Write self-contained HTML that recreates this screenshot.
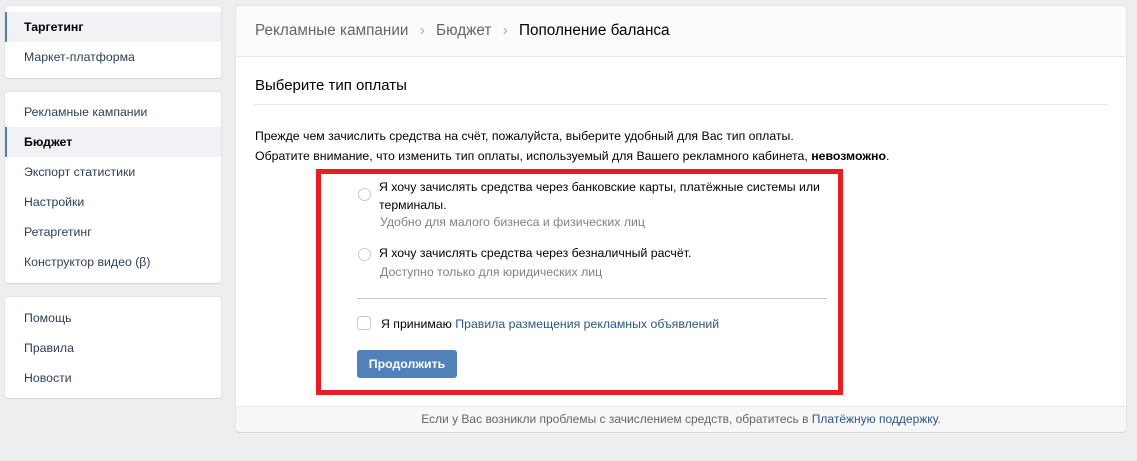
<!DOCTYPE html>
<html><head><meta charset="utf-8"><style>
*{margin:0;padding:0;box-sizing:border-box}
body{width:1137px;height:461px;background:#edeef0;font-family:"Liberation Sans",sans-serif;font-size:12.3px;color:#000;position:relative;overflow:hidden}
.p{position:absolute;background:#fff;border-radius:3px;box-shadow:0 1px 0 0 #d7d8db,0 0 0 1px #e3e4e8}
.it{position:absolute;left:0;width:216px;height:30px;line-height:30px;padding-left:19px;color:#2f3f55;font-size:12.3px}
.it.sel{background:#f0f2f5;border-left:2px solid #5181b8;padding-left:17px;color:#000;font-weight:bold}
.a{position:absolute;white-space:nowrap}
</style></head><body>
<div class="p" style="left:5px;top:6px;width:216px;height:72px">
<div class="it sel" style="top:6px">Таргетинг</div>
<div class="it" style="top:36px">Маркет-платформа</div>
</div>
<div class="p" style="left:5px;top:92px;width:216px;height:191px">
<div class="it" style="top:5px">Рекламные кампании</div>
<div class="it sel" style="top:35px">Бюджет</div>
<div class="it" style="top:65px">Экспорт статистики</div>
<div class="it" style="top:95px">Настройки</div>
<div class="it" style="top:125px">Ретаргетинг</div>
<div class="it" style="top:155px">Конструктор видео (β)</div>
</div>
<div class="p" style="left:5px;top:297px;width:216px;height:101px">
<div class="it" style="top:6px">Помощь</div>
<div class="it" style="top:36px">Правила</div>
<div class="it" style="top:66px">Новости</div>
</div>
<div class="p" style="left:236px;top:6px;width:890px;height:426px;overflow:hidden">
<div style="height:51px;background:#fafbfc;border-bottom:1px solid #e7e8ec"></div>
<div class="a" style="left:19px;top:16px;font-size:15.3px;color:#656565">Рекламные кампании <span style="color:#b0b0b0;margin:0 7px">›</span> Бюджет <span style="color:#b0b0b0;margin:0 7px">›</span> <span style="color:#000">Пополнение баланса</span></div>
<div class="a" style="left:19px;top:71px;font-size:15px">Выберите тип оплаты</div>
<div style="position:absolute;left:18px;top:98px;width:854px;border-top:1px solid #e7e8ec"></div>
<div class="a" style="left:19px;top:120px;line-height:20px">Прежде чем зачислить средства на счёт, пожалуйста, выберите удобный для Вас тип оплаты.<br>Обратите внимание, что изменить тип оплаты, используемый для Вашего рекламного кабинета, <b>невозможно</b>.</div>
<div style="position:absolute;left:0;top:400px;width:890px;height:26px;background:#f7f7f7;border-top:1px solid #e7e8ec;text-align:center;line-height:24px;color:#656565;font-size:12px">Если у Вас возникли проблемы с зачислением средств, обратитесь в <span style="color:#2a5885">Платёжную поддержку</span>.</div>
</div>
<div style="position:absolute;left:316px;top:169px;width:527px;height:226px;border:5px solid #ea1c24"></div>
<div style="position:absolute;left:358px;top:188px;width:13px;height:13px;border:1px solid #c5cbd3;border-radius:50%"></div>
<div class="a" style="left:379px;top:178px;line-height:18px">Я хочу зачислять средства через банковские карты, платёжные системы или<br>терминалы.</div>
<div class="a" style="left:380px;top:215px;color:#828282">Удобно для малого бизнеса и физических лиц</div>
<div style="position:absolute;left:358px;top:248px;width:13px;height:13px;border:1px solid #c5cbd3;border-radius:50%"></div>
<div class="a" style="left:379px;top:246px">Я хочу зачислять средства через безналичный расчёт.</div>
<div class="a" style="left:380px;top:265px;color:#828282">Доступно только для юридических лиц</div>
<div style="position:absolute;left:357px;top:298px;width:470px;border-top:1px solid #c5cbd3"></div>
<div style="position:absolute;left:357px;top:316px;width:14px;height:14px;border:1px solid #c5cbd3;border-radius:3px"></div>
<div class="a" style="left:381px;top:317px">Я принимаю <span style="color:#2a5885">Правила размещения рекламных объявлений</span></div>
<div style="position:absolute;left:357px;top:350px;width:100px;height:28px;background:#5181b8;border-radius:3px;color:#fff;font-weight:bold;text-align:center;line-height:28px;font-size:12.3px">Продолжить</div>
</body></html>
